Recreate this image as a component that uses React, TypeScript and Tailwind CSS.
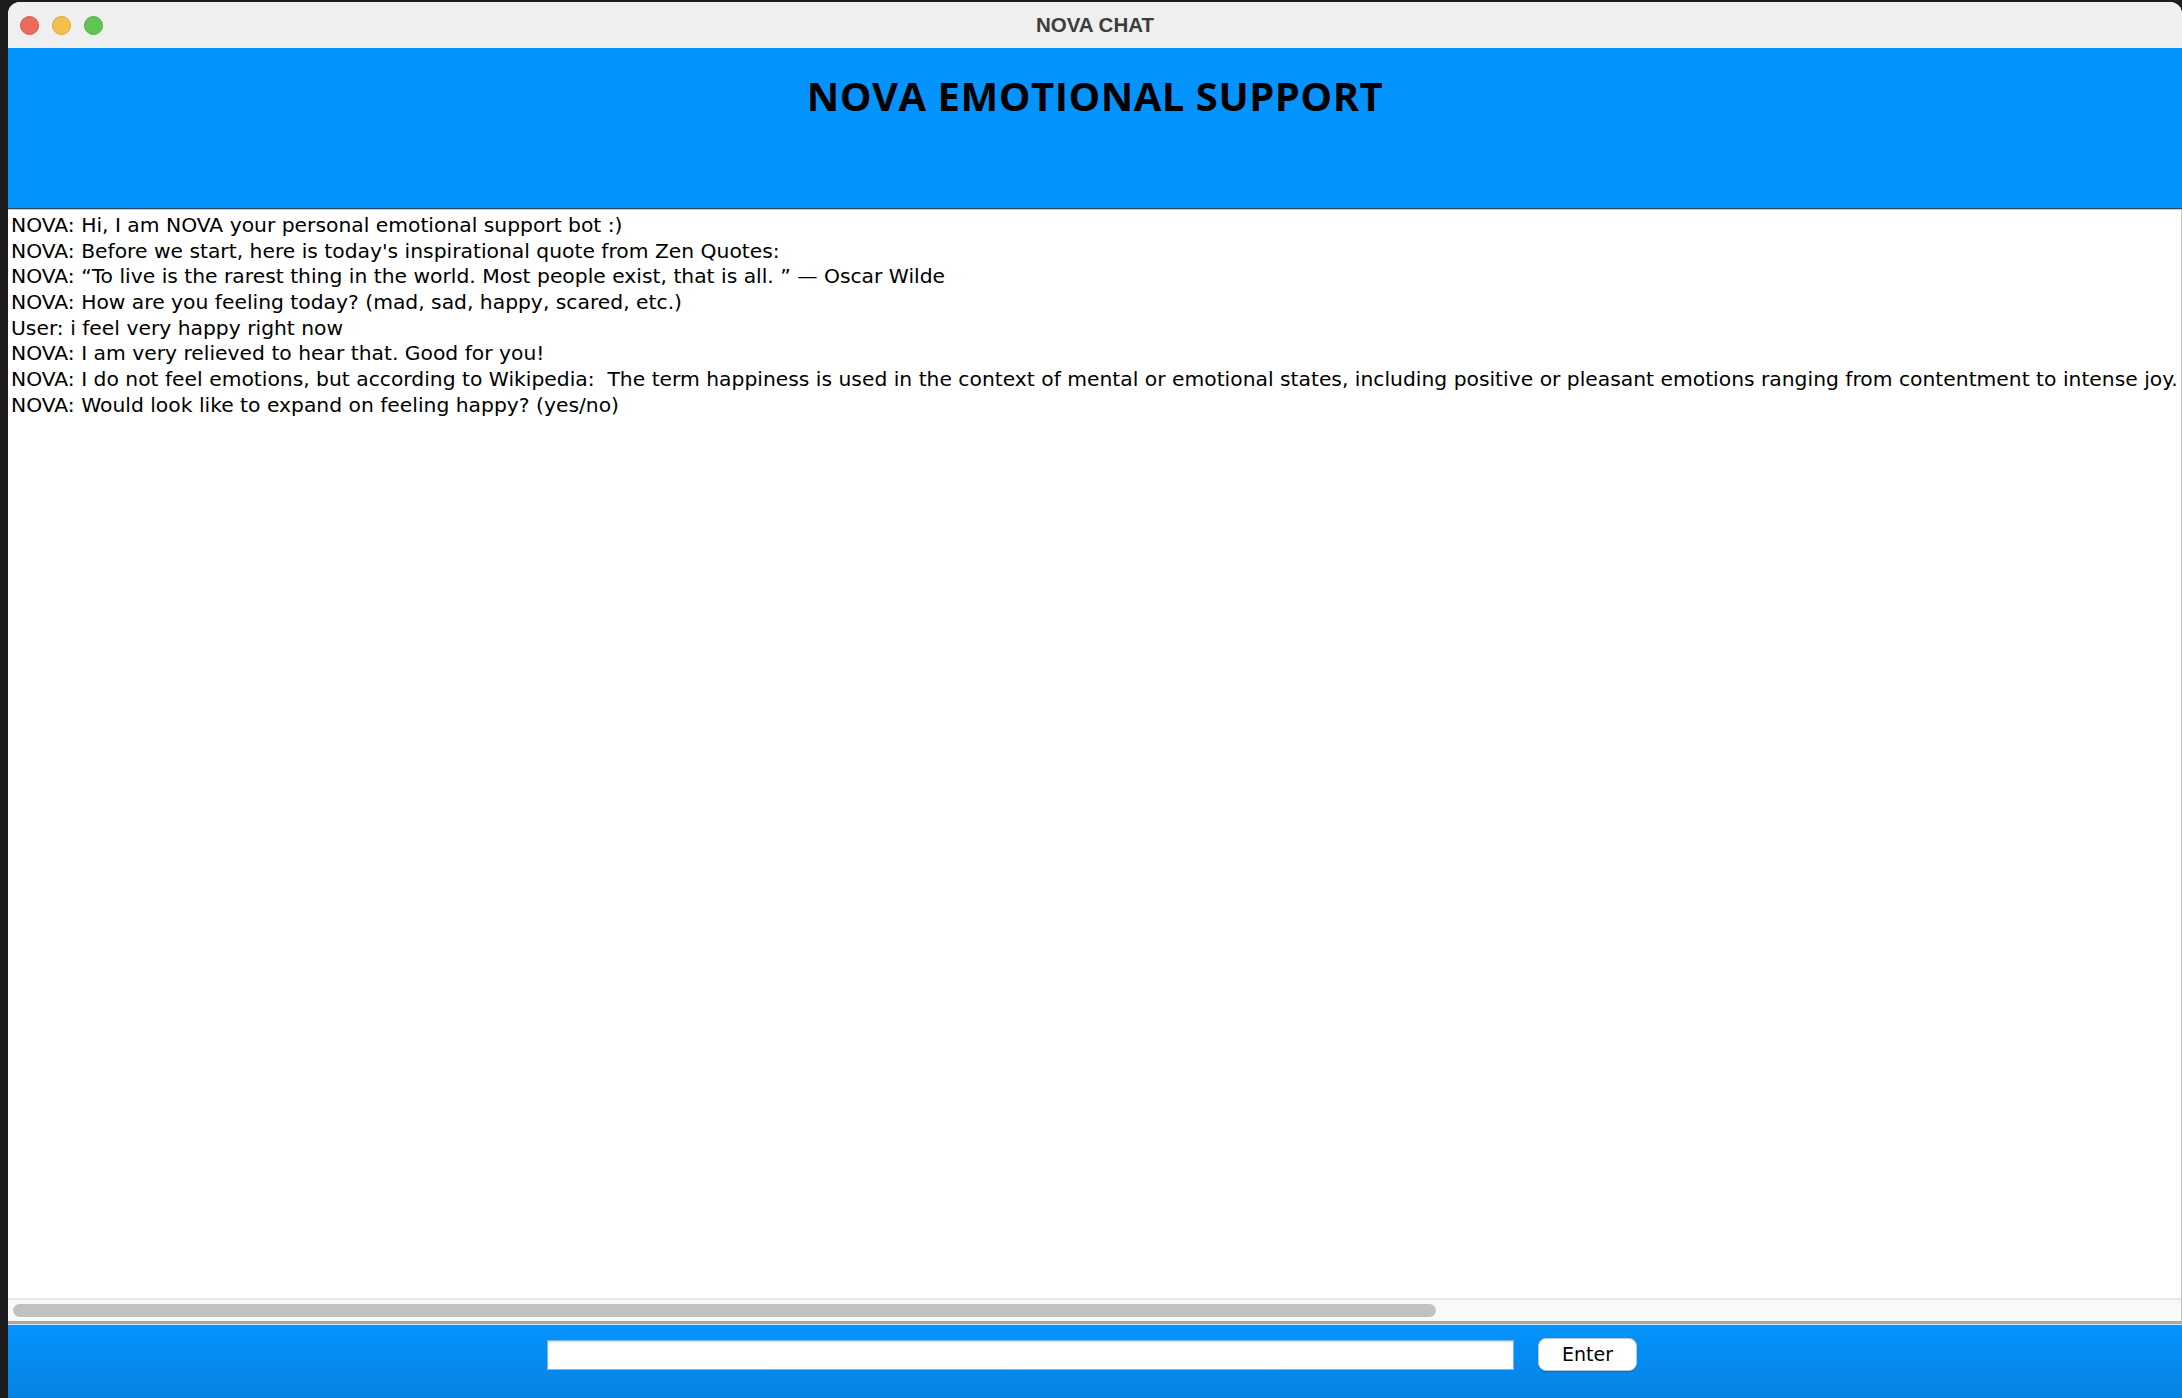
import React from 'react';

const lines = [
  'NOVA: Hi, I am NOVA your personal emotional support bot :)',
  "NOVA: Before we start, here is today's inspirational quote from Zen Quotes:",
  'NOVA: \u201CTo live is the rarest thing in the world. Most people exist, that is all. \u201D \u2014 Oscar Wilde',
  'NOVA: How are you feeling today? (mad, sad, happy, scared, etc.)',
  'User: i feel very happy right now',
  'NOVA: I am very relieved to hear that. Good for you!',
  'NOVA: I do not feel emotions, but according to Wikipedia:  The term happiness is used in the context of mental or emotional states, including positive or pleasant emotions ranging from contentment to intense joy.',
  'NOVA: Would look like to expand on feeling happy? (yes/no)',
];

const TrafficLights = () => (
  <div className="flex items-center gap-[13px] pl-[12px]">
    <span className="w-[19px] h-[19px] rounded-full bg-[#ed6a5e] border border-[#d9574b]" />
    <span className="w-[19px] h-[19px] rounded-full bg-[#f5bf4f] border border-[#dea73c]" />
    <span className="w-[19px] h-[19px] rounded-full bg-[#61c554] border border-[#4fad43]" />
  </div>
);

const App = () => {
  return (
    <div className="w-[2182px] h-[1398px] bg-[#1d1d1d] pl-[8px] pt-[2px] overflow-hidden">
      <div className="flex flex-col h-full rounded-t-[12px] overflow-hidden bg-white">
        {/* title bar */}
        <div className="relative h-[46px] shrink-0 bg-[#efefef] flex items-center">
          <TrafficLights />
          <div className="absolute inset-0 flex items-center justify-center text-[20.5px] font-bold text-[#3d3d3d] font-['Liberation_Sans',Arial,sans-serif]">
            NOVA CHAT
          </div>
        </div>

        {/* header */}
        <div className="h-[161px] shrink-0 bg-[#0594fe] border-b border-[#2b4a66] flex justify-center pt-[20px]">
          <h1 className="text-[40px] leading-[56px] font-bold tracking-[0.5px] text-black font-['Open_Sans',sans-serif]">
            NOVA EMOTIONAL SUPPORT
          </h1>
        </div>

        {/* chat log */}
        <div className="flex-1 flex flex-col border-t border-[#c9c9c9] border-r border-r-[#c4c4c4] min-h-0">
          <div className="flex-1 overflow-hidden pl-[3px] pt-[3px] font-['DejaVu_Sans',sans-serif] text-[20.3px] leading-[25.65px] text-black">
            {lines.map((l, i) => (
              <div key={i} className="whitespace-pre">
                {l}
              </div>
            ))}
          </div>
          {/* horizontal scrollbar */}
          <div className="h-[23px] shrink-0 bg-[#f9f9f9] border-t-2 border-[#e6e6e6] pl-[5px] pt-[4px]">
            <div className="w-[1423px] h-[13px] rounded-full bg-[#c1c1c1]" />
          </div>
        </div>

        {/* input bar */}
        <div className="border-t-[3px] border-[#a8a8a8] shrink-0" />
        <div className="h-[1px] bg-[#cfe6ff] shrink-0" />
        <div className="h-[73px] shrink-0 bg-gradient-to-b from-[#0593fd] to-[#0484e3] flex justify-center items-start gap-[24px] pt-[15px] pr-[6px]">
          <div className="w-[967px] h-[30px] bg-white border border-[#7fb4e6] shadow-[inset_0_1px_2px_rgba(0,0,0,0.15)]" />
          <button className="w-[99px] h-[33px] -mt-[2px] bg-white rounded-[8px] border border-[#b9c9d9] shadow-[0_1px_1px_rgba(0,0,0,0.2)] text-[19px] text-black font-['DejaVu_Sans',sans-serif] leading-none">
            Enter
          </button>
        </div>
      </div>
    </div>
  );
};

export default App;
